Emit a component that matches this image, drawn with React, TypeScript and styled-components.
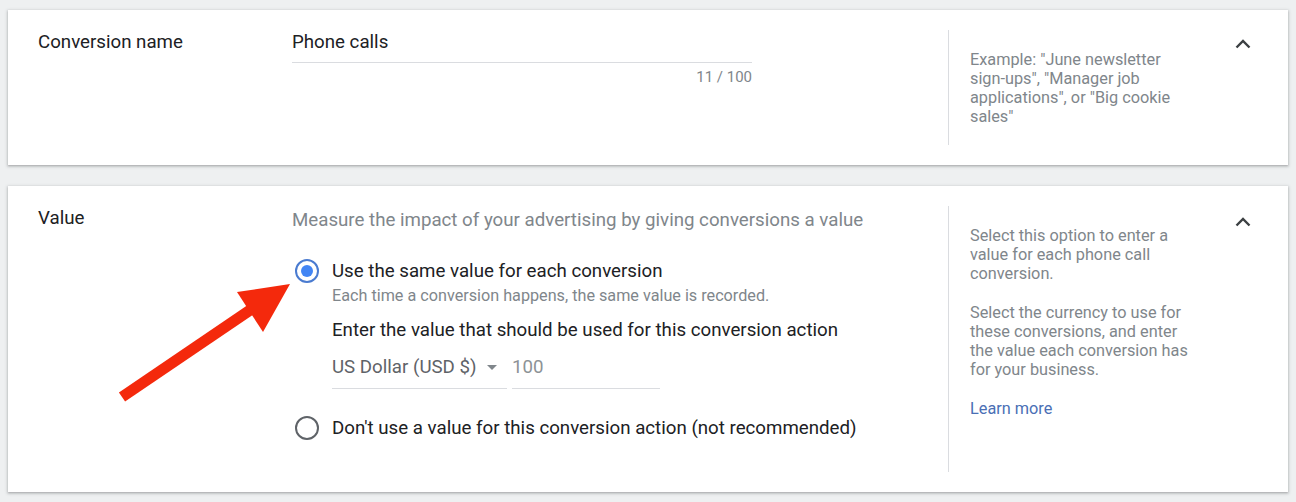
import React from 'react'

import styled, { createGlobalStyle } from 'styled-components'

const GlobalStyle = createGlobalStyle`
  html, body {
    margin: 0;
    padding: 0;
    background: #eef0f1;
  }
  body {
    font-family: Roboto, "Liberation Sans", Arial, sans-serif;
    color: #202124;
    -webkit-font-smoothing: antialiased;
  }
`

const Page = styled.div`
  display: flex;
  flex-direction: column;
  gap: 21px;
  padding: 10px 8px;
`

const Card = styled.section`
  position: relative;
  display: flex;
  align-items: flex-start;
  background: #fff;
  padding: 20px 37px 20px 30px;
  box-shadow: 0 1px 2px rgba(60, 64, 67, 0.3), 0 1px 3px 1px rgba(60, 64, 67, 0.15);
`

const Label = styled.div`
  flex: none;
  width: 254px;
  font-size: 18.7px;
  line-height: 24px;
  color: #202124;
`

const Main = styled.div<{ $pad?: number }>`
  flex: none;
  width: 656px;
  padding-top: ${(p) => p.$pad ?? 0}px;
  padding-bottom: ${(p) => (p.$pad ? 32 : 0)}px;
`

const Aside = styled.aside`
  flex: none;
  align-self: stretch;
  width: 287px;
  box-sizing: border-box;
  border-left: 1px solid #dadce0;
  padding: 20px 40px 19px 21px;
  font-size: 16.3px;
  line-height: 19px;
  color: #80868b;
`

const HelpPara = styled.p`
  margin: 0 0 20px;
  &:last-child {
    margin-bottom: 0;
  }
`

const Link = styled.a`
  color: #4a6fb5;
  text-decoration: none;
`

const Toggle = styled.svg<{ $top: number }>`
  flex: none;
  margin-top: ${(p) => p.$top}px;
`

const TextField = styled.div`
  width: 460px;
`

const FieldValue = styled.div`
  font-size: 18.7px;
  line-height: 24px;
  padding-bottom: 8px;
  border-bottom: 1px solid #dadce0;
  color: #202124;
`

const Counter = styled.div`
  margin-top: 6px;
  text-align: right;
  font-size: 15px;
  line-height: 16px;
  color: #80868b;
`

const Intro = styled.div`
  font-size: 18.7px;
  line-height: 24px;
  color: #80868b;
`

const RadioRow = styled.div<{ $gap: number }>`
  display: flex;
  align-items: flex-start;
  gap: 13px;
  margin-top: ${(p) => p.$gap}px;
  margin-left: 3px;
`

const RadioCircle = styled.span<{ $checked?: boolean }>`
  flex: none;
  box-sizing: border-box;
  width: 24px;
  height: 24px;
  border-radius: 50%;
  border: 2px solid ${(p) => (p.$checked ? '#4a7bd0' : '#5f6368')};
  display: flex;
  align-items: center;
  justify-content: center;

  &::after {
    content: '';
    display: ${(p) => (p.$checked ? 'block' : 'none')};
    width: 12px;
    height: 12px;
    border-radius: 50%;
    background: #4285f4;
  }
`

const RadioBody = styled.div`
  display: flex;
  flex-direction: column;
`

const RadioTitle = styled.div`
  font-size: 18.7px;
  line-height: 24px;
  color: #202124;
`

const RadioHint = styled.div`
  margin-top: 3px;
  font-size: 16.2px;
  line-height: 20px;
  color: #80868b;
`

const Prompt = styled.div`
  margin-top: 12px;
  font-size: 18.7px;
  line-height: 24px;
  color: #202124;
`

const Inputs = styled.div`
  display: flex;
  gap: 5px;
  margin-top: 13px;
`

const Select = styled.div`
  display: flex;
  align-items: center;
  width: 175px;
  box-sizing: border-box;
  padding: 0 10px 9px 0;
  border-bottom: 1px solid #dadce0;
  font-size: 18.7px;
  line-height: 24px;
  color: #5f6368;

  & > svg {
    margin-left: auto;
  }
`

const Amount = styled.div`
  width: 148px;
  padding-bottom: 9px;
  border-bottom: 1px solid #dadce0;
  font-size: 18.7px;
  line-height: 24px;
  color: #8d9296;
`

const Arrow = styled.svg`
  position: absolute;
  left: 92px;
  top: 84px;
  pointer-events: none;
`

const Chevron = ({ top }: { top: number }) => (
  <Toggle $top={top} width="16" height="10" viewBox="0 0 16 10">
    <polyline points="1.5,8.5 8,2 14.5,8.5" fill="none" stroke="#3c4043" strokeWidth="2.4" />
  </Toggle>
)

const App = () => {
  return (
    <>
      <GlobalStyle />
      <Page>
        <Card>
          <Label>Conversion name</Label>
          <Main>
            <TextField>
              <FieldValue>Phone calls</FieldValue>
              <Counter>11 / 100</Counter>
            </TextField>
          </Main>
          <Aside>
            <HelpPara>
              Example: "June newsletter sign-ups", "Manager job applications", or "Big cookie sales"
            </HelpPara>
          </Aside>
          <Chevron top={9} />
        </Card>

        <Card>
          <Label>Value</Label>
          <Main $pad={2}>
            <Intro>Measure the impact of your advertising by giving conversions a value</Intro>
            <RadioRow $gap={27}>
              <RadioCircle $checked />
              <RadioBody>
                <RadioTitle>Use the same value for each conversion</RadioTitle>
                <RadioHint>Each time a conversion happens, the same value is recorded.</RadioHint>
                <Prompt>Enter the value that should be used for this conversion action</Prompt>
                <Inputs>
                  <Select>
                    US Dollar (USD $)
                    <svg width="10" height="5" viewBox="0 0 10 5">
                      <polygon points="0,0 10,0 5,5" fill="#80868b" />
                    </svg>
                  </Select>
                  <Amount>100</Amount>
                </Inputs>
              </RadioBody>
            </RadioRow>
            <RadioRow $gap={27}>
              <RadioCircle />
              <RadioTitle>Don't use a value for this conversion action (not recommended)</RadioTitle>
            </RadioRow>
          </Main>
          <Aside>
            <HelpPara>Select this option to enter a value for each phone call conversion.</HelpPara>
            <HelpPara>
              Select the currency to use for these conversions, and enter the value each conversion has for your
              business.
            </HelpPara>
            <HelpPara>
              <Link href="#">Learn more</Link>
            </HelpPara>
          </Aside>
          <Chevron top={11} />

          <Arrow width="200" height="135" viewBox="0 0 200 135">
            <line x1="22" y1="127" x2="156" y2="36" stroke="#f4290c" strokeWidth="11" />
            <polygon points="190,14 137,22 163,62" fill="#f4290c" />
          </Arrow>
        </Card>
      </Page>
    </>
  )
}

export default App
